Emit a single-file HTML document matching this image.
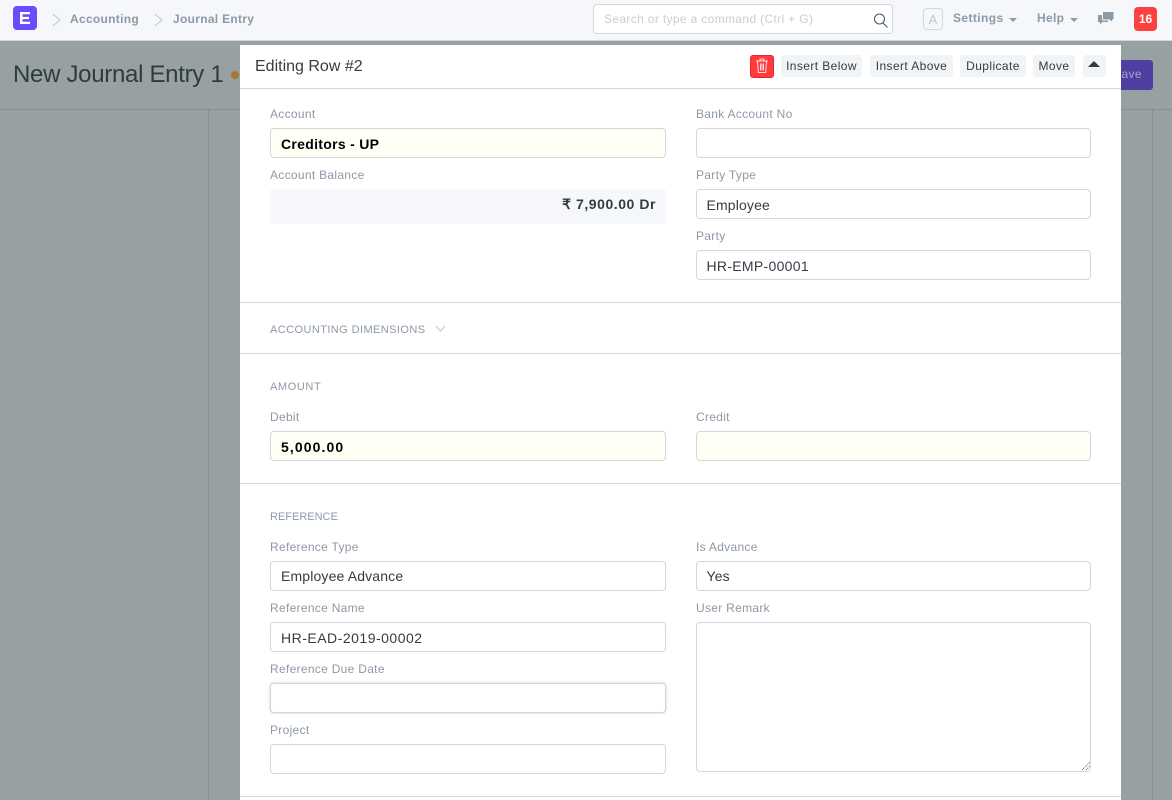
<!DOCTYPE html>
<html><head><meta charset="utf-8"><style>
*{box-sizing:border-box}
html,body{margin:0;padding:0}
body{width:1172px;height:800px;overflow:hidden;position:relative;background:#98a1a1;font-family:"Liberation Sans",sans-serif;color:#333c44}
.a{position:absolute;white-space:nowrap}
.l{position:absolute;white-space:nowrap;font-size:12px;line-height:14px;color:#8d99a6;letter-spacing:.3px}
.i{position:absolute;height:30px;background:#fff;border:1px solid #d1d8dd;border-radius:4px;font-size:14px;line-height:30px;padding-left:10px;color:#333c44;letter-spacing:.15px;white-space:nowrap}
.r{padding-left:9.500px}
.y{background:#fffff5}
.b{font-weight:700;color:#000}
.hr{position:absolute;left:240px;width:881px;height:1px;background:#d1d8dd}
.s{position:absolute;white-space:nowrap;font-size:11px;line-height:14px;color:#8d99a6;letter-spacing:.4px}
.btn{position:absolute;top:55px;height:22px;background:#f0f4f7;border-radius:3px;font-size:12px;line-height:22px;text-align:center;color:#333c44;letter-spacing:.4px;white-space:nowrap}
</style></head><body>
<div class="a" style="left:0;top:0;width:1172px;height:41px;background:#f5f7fa;border-bottom:1px solid #d1d8dd"></div>
<div class="a" style="left:13px;top:6px;width:24px;height:24px;border-radius:4px;background:#6a4cff"></div>
<svg class="a" style="left:20px;top:12px" width="10" height="12" fill="#fff"><path d="M0 0h10v2.200H2.500v2.700H9v2.200H2.500v2.700H10V12H0z"/></svg>
<svg class="a" style="left:50px;top:12px" width="14" height="16" fill="none" stroke="#c8d0d8" stroke-width="1.300"><path d="M3 2l7 6-7 6"/></svg>
<div class="a" style="left:70px;top:12px;font-size:12px;line-height:15px;font-weight:700;color:#8d99a6;letter-spacing:.3px">Accounting</div>
<svg class="a" style="left:152px;top:12px" width="14" height="16" fill="none" stroke="#c8d0d8" stroke-width="1.300"><path d="M3 2l7 6-7 6"/></svg>
<div class="a" style="left:173px;top:12px;font-size:12px;line-height:15px;font-weight:700;color:#8d99a6;letter-spacing:.3px">Journal Entry</div>
<div class="a" style="left:593px;top:4px;width:300px;height:30px;background:#fff;border:1px solid #d1d8dd;border-radius:4px;padding-left:10px;font-size:12px;line-height:28px;color:#c8ced4;letter-spacing:.35px">Search or type a command (Ctrl + G)</div>
<svg class="a" style="left:872px;top:12px" width="17" height="17" fill="none" stroke="#4c5a67" stroke-width="1.100"><circle cx="7.500" cy="7" r="5"/><path d="M11 11l4.500 4.500"/></svg>
<div class="a" style="left:923px;top:8px;width:20px;height:22px;border:1px solid #d1d8dd;border-radius:4px;font-size:13px;line-height:21px;text-align:center;color:#c0c6cc">A</div>
<div class="a" style="left:953px;top:11px;font-size:12px;line-height:15px;font-weight:700;color:#8d99a6;letter-spacing:.4px">Settings</div>
<div class="a" style="left:1009px;top:18px;border:4px solid transparent;border-top-color:#8d99a6;border-bottom:0"></div>
<div class="a" style="left:1037px;top:11px;font-size:12px;line-height:15px;font-weight:700;color:#8d99a6;letter-spacing:.3px">Help</div>
<div class="a" style="left:1070px;top:18px;border:4px solid transparent;border-top-color:#8d99a6;border-bottom:0"></div>
<svg class="a" style="left:1098px;top:12px" width="16" height="13" fill="#8d99a6"><path d="M5 0h10.500v7.500H14v2l-2.500-2H5z"/><path d="M0 3h4v5.500h6V10H4.500L2 12.500V10H0z"/></svg>
<div class="a" style="left:1134px;top:7px;width:23px;height:24px;border-radius:4px;background:#ff4040;color:#fff;font-weight:700;font-size:12px;line-height:24px;text-align:center">16</div>

<div class="a" style="left:13px;top:60px;font-size:24px;line-height:30px;color:#2f3b40;letter-spacing:-.3px">New Journal Entry 1</div>
<div class="a" style="left:231px;top:71px;width:8px;height:8px;border-radius:50%;background:#a67a2e"></div>
<div class="a" style="left:1110px;top:60px;width:43px;height:30px;background:#4f3fa0;border-radius:3px;font-size:12px;line-height:29px;color:#a9a4c8;text-align:right;padding-right:11px;letter-spacing:.4px">ave</div>
<div class="a" style="left:0;top:109px;width:1172px;height:1px;background:#859090"></div>
<div class="a" style="left:208px;top:110px;width:1px;height:690px;background:#859090"></div>
<div class="a" style="left:1152px;top:110px;width:1px;height:690px;background:#859090"></div>

<div class="a" style="left:240px;top:45px;width:881px;height:755px;background:#fff"></div>
<div class="a" style="left:255px;top:57px;font-size:16px;line-height:19px;color:#333c44">Editing Row #2</div>
<div class="a" style="left:750px;top:55px;width:24px;height:23px;background:#ff3b3b;border:1px solid #e02a2a;border-radius:3px"></div>
<svg class="a" style="left:755px;top:58px" width="14" height="16" fill="none" stroke="#ffdede" stroke-width="1"><path d="M1 3h12M5 3V1h4v2M2.500 3l.8 11.500h7.400l.8-11.500M5.500 5.500v7M7 5.500v7M8.500 5.500v7"/></svg>
<div class="btn" style="left:781px;width:81px">Insert Below</div>
<div class="btn" style="left:870px;width:83px">Insert Above</div>
<div class="btn" style="left:960px;width:66px">Duplicate</div>
<div class="btn" style="left:1033px;width:42px">Move</div>
<div class="btn" style="left:1083px;width:23px"></div>
<div class="a" style="left:1088px;top:61px;border:6px solid transparent;border-bottom-color:#333c44;border-top:0"></div>
<div class="hr" style="top:88px"></div>

<div class="l" style="left:270px;top:107px">Account</div>
<div class="i y b" style="left:270px;top:128px;width:396px;letter-spacing:.3px">Creditors - UP</div>
<div class="l" style="left:270px;top:168px">Account Balance</div>
<div class="a" style="left:270px;top:189px;width:396px;height:35px;background:#f5f7fa;border-radius:3px;font-size:14px;line-height:30px;font-weight:700;text-align:right;padding-right:10px;color:#333c44;letter-spacing:.55px">₹ 7,900.00 Dr</div>
<div class="l" style="left:696px;top:107px">Bank Account No</div>
<div class="i" style="left:696px;top:128px;width:395px"></div>
<div class="l" style="left:696px;top:168px">Party Type</div>
<div class="i r" style="left:696px;top:189px;width:395px">Employee</div>
<div class="l" style="left:696px;top:229px">Party</div>
<div class="i r" style="left:696px;top:250px;width:395px;letter-spacing:.3px">HR-EMP-00001</div>
<div class="hr" style="top:302px"></div>

<div class="s" style="left:270px;top:323px;letter-spacing:.42px">ACCOUNTING DIMENSIONS</div>
<svg class="a" style="left:435px;top:325px" width="11" height="8" fill="none" stroke="#c4cbd1" stroke-width="1.300"><path d="M1 1l4.500 5L10 1"/></svg>
<div class="hr" style="top:353px"></div>

<div class="s" style="left:270px;top:380px;letter-spacing:.6px">AMOUNT</div>
<div class="l" style="left:270px;top:410px">Debit</div>
<div class="i y b" style="left:270px;top:431px;width:396px;letter-spacing:1.100px">5,000.00</div>
<div class="l" style="left:696px;top:410px">Credit</div>
<div class="i y" style="left:696px;top:431px;width:395px"></div>
<div class="hr" style="top:483px"></div>

<div class="s" style="left:270px;top:510px;letter-spacing:0">REFERENCE</div>
<div class="l" style="left:270px;top:540px">Reference Type</div>
<div class="i" style="left:270px;top:561px;width:396px;line-height:28px">Employee Advance</div>
<div class="l" style="left:270px;top:601px">Reference Name</div>
<div class="i" style="left:270px;top:622px;width:396px;letter-spacing:.5px">HR-EAD-2019-00002</div>
<div class="l" style="left:270px;top:662px">Reference Due Date</div>
<div class="i" style="left:270px;top:683px;width:396px;box-shadow:0 0 2px rgba(120,150,180,.5)"></div>
<div class="l" style="left:270px;top:723px">Project</div>
<div class="i" style="left:270px;top:744px;width:396px"></div>
<div class="l" style="left:696px;top:540px">Is Advance</div>
<div class="i r" style="left:696px;top:561px;width:395px;line-height:28px">Yes</div>
<div class="l" style="left:696px;top:601px">User Remark</div>
<div class="i" style="left:696px;top:622px;width:395px;height:150px"></div>
<svg class="a" style="left:1082px;top:762px" width="9" height="9" stroke="#555" stroke-width="1" stroke-dasharray="1 1"><path d="M0 8L8 0M4 8L8 4"/></svg>
<div class="hr" style="top:796px"></div>
</body></html>
